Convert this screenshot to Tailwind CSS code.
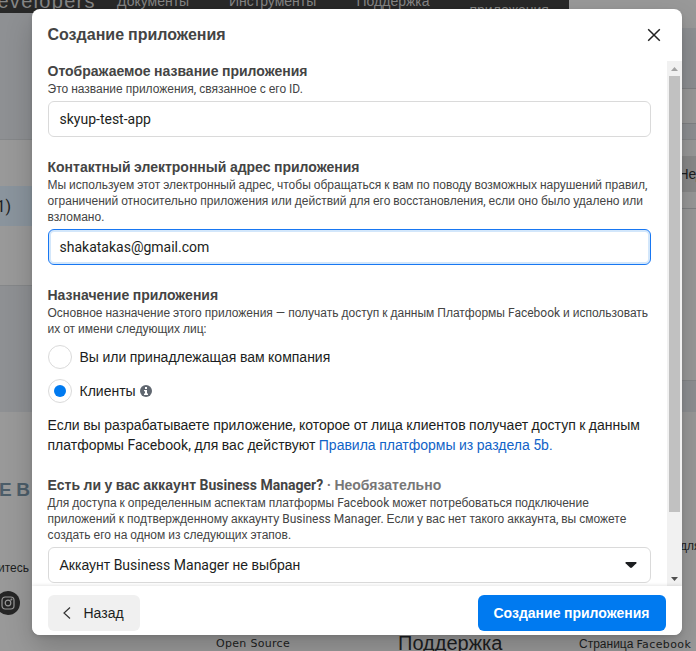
<!DOCTYPE html>
<html lang="ru">
<head>
<meta charset="utf-8">
<title>Создание приложения</title>
<script src="https://cdn.jsdelivr.net/npm/@tailwindcss/browser@4"></script>
</head>
<body class="relative h-[651px] w-[696px] overflow-hidden bg-[#999] font-['Roboto','Liberation_Sans',sans-serif] text-[#1c1e21]">

<!-- Dimmed page behind the dialog -->
<div class="flex h-[651px] flex-col overflow-hidden" aria-hidden="true">
  <div class="flex h-[13px] shrink-0">
    <div class="relative h-[13px] w-[569px] overflow-hidden bg-[#282828] whitespace-nowrap text-[#858585]">
      <span class="absolute -left-[15px] -top-[11px] font-['Liberation_Sans'] text-[20px] leading-[24px] tracking-[1.3px]">developers</span>
      <span class="absolute left-[117px] -top-[8px] text-[14px] leading-[18px]">Документы</span>
      <span class="absolute left-[229px] -top-[8px] text-[14px] leading-[18px]">Инструменты</span>
      <span class="absolute left-[356.500px] -top-[8px] text-[14px] leading-[18px]">Поддержка</span>
      <span class="absolute left-[469.500px] top-[1px] text-[14px] leading-[18px]">приложения</span>
    </div>
  </div>
  <div class="flex h-[399px] shrink-0 justify-between bg-[#8e9093]">
    <div class="flex w-[60px] flex-col pt-[126px]">
      <div class="flex h-[147px] flex-col border-y border-[#858789] bg-[#999] pt-[46px]">
        <div class="flex h-[40px] items-center bg-[#8a949d] text-[16px]"><span class="-ml-[3.500px] mt-[1px]">1)</span></div>
      </div>
    </div>
    <div class="flex w-[127px] flex-col">
      <div class="h-[15px] shrink-0 bg-[#999]"></div>
      <div class="mt-[60px] h-[36px] shrink-0 border-y border-[#808284] bg-[#999]"></div>
      <div class="mt-[15px] h-[242px] shrink-0 border-y border-[#858789] bg-[#999] pt-[16px]">
        <div class="flex h-[36px] items-center overflow-hidden bg-[#8a8a8a] pl-[109.500px] text-[14px] whitespace-nowrap"><span>Неделя</span></div>
        <div class="mt-[16px] h-px bg-[#808284]"></div>
      </div>
    </div>
  </div>
  <div class="relative h-[239px] shrink-0 overflow-hidden bg-[#999] whitespace-nowrap">
    <span class="absolute -left-[1px] top-[66px] font-['Liberation_Sans'] text-[19px] leading-[24px] font-bold tracking-[4.500px] text-[#4c5d69]">EB</span>
    <span class="absolute -left-[2px] top-[148px] text-[12px] leading-[16px]">итесь на</span>
    <span class="absolute left-[680px] top-[126px] text-[12px] leading-[16px]">для</span>
    <div class="absolute -left-[4px] top-[179px] flex size-[24px] items-center justify-center rounded-full bg-[#262626]">
      <svg class="size-[14px]" viewBox="0 0 14 14" fill="none" stroke="#999" stroke-width="1.2"><rect x="1" y="1" width="12" height="12" rx="3.2"/><circle cx="7" cy="7" r="2.8"/><circle cx="10.4" cy="3.6" r=".4"/></svg>
    </div>
    <span class="absolute left-[216px] top-[224px] font-['DejaVu_Sans'] text-[11px] leading-[16px] tracking-[.3px]">Open Source</span>
    <span class="absolute left-[398px] top-[218px] text-[20px] leading-[26px]">Поддержка</span>
    <span class="absolute left-[579px] top-[224px] text-[12px] leading-[16px]">Страница <span class="font-['DejaVu_Sans'] text-[11px] tracking-[.4px]">Facebook</span></span>
  </div>
</div>

<!-- Dialog -->
<div role="dialog" class="absolute left-[32px] top-[9px] flex h-[626px] w-[650px] flex-col overflow-hidden rounded-[8px] bg-white text-[14px] leading-[20px] whitespace-nowrap shadow-[0_12px_28px_rgba(0,0,0,.2),0_2px_4px_rgba(0,0,0,.1)]">
  <div class="flex h-[52px] shrink-0 items-center justify-between pl-[15.500px] pr-[21px]">
    <h2 class="text-[16px] font-bold text-[#444]">Создание приложения</h2>
    <svg class="size-[14px]" viewBox="0 0 14 14" fill="none" stroke="#222" stroke-width="1.5"><path d="M1.2 1.2 12.8 12.8M12.8 1.2 1.2 12.8"/></svg>
  </div>

  <div class="flex h-[525px] shrink-0 overflow-hidden">
    <div class="flex w-[635px] flex-col pl-[15.500px] pr-[16px]">
      <h3 class="font-bold text-[#444]">Отображаемое название приложения</h3>
      <p class="text-[12px] leading-[16px] text-[#444]">Это название приложения, связанное с его ID.</p>
      <div class="ml-[.5px] mt-[4px] flex h-[36px] shrink-0 items-center rounded-[6px] border border-[#dadada] px-[10.500px]"><span>skyup-test-app</span></div>

      <h3 class="mt-[20px] font-bold text-[#444]">Контактный электронный адрес приложения</h3>
      <p class="text-[12px] leading-[16px] text-[#444]">Мы используем этот электронный адрес, чтобы обращаться к вам по поводу возможных нарушений правил,<br>ограничений относительно приложения или действий для его восстановления, если оно было удалено или<br>взломано.</p>
      <div class="ml-[.5px] mt-[4px] flex h-[36px] shrink-0 items-center rounded-[6px] border border-[#1877f2] px-[10.500px] inset-ring-2 inset-ring-[#d3e7fb]"><span>shakatakas@gmail.com</span></div>

      <h3 class="mt-[20px] font-bold text-[#444]">Назначение приложения</h3>
      <p class="text-[12px] leading-[16px] text-[#444]">Основное назначение этого приложения — получать доступ к данным Платформы Facebook и использовать<br>их от имени следующих лиц:</p>
      <div class="ml-[.5px] mt-[8px] flex h-[24px] shrink-0 items-center gap-[7.500px]">
        <span class="size-[24px] rounded-full border border-[#dadada]"></span><span>Вы или принадлежащая вам компания</span>
      </div>
      <div class="ml-[.5px] mt-[10px] flex h-[24px] shrink-0 items-center">
        <span class="mr-[7.500px] flex size-[24px] items-center justify-center rounded-full border border-[#dadada]"><span class="size-[12px] rounded-full bg-[#007af0]"></span></span><span>Клиенты</span>
        <svg class="ml-[4.500px] size-[12px]" viewBox="0 0 12 12"><circle cx="6" cy="6" r="6" fill="#606770"/><path fill="#fff" d="M5 2h2v2H5zM4 5h3v3.500h1V10H4V8.500h1V6.200H4z"/></svg>
      </div>
      <p class="mt-[12px]">Если вы разрабатываете приложение, которое от лица клиентов получает доступ к данным<br>платформы Facebook, для вас действуют <a class="text-[#1163c7]">Правила платформы из раздела 5b.</a></p>

      <h3 class="mt-[20px] font-bold text-[#444]">Есть ли у вас аккаунт Business Manager? <span class="text-[#777]">· Необязательно</span></h3>
      <p class="text-[12px] leading-[16px] text-[#444]">Для доступа к определенным аспектам платформы Facebook может потребоваться подключение<br>приложений к подтвержденному аккаунту Business Manager. Если у вас нет такого аккаунта, вы сможете<br>создать его на одном из следующих этапов.</p>
      <div class="ml-[.5px] mt-[4px] flex h-[36px] shrink-0 items-center justify-between rounded-[6px] border border-[#dadada] pl-[10.500px] pr-[13px]">
        <span>Аккаунт Business Manager не выбран</span>
        <svg class="h-[6px] w-[12px]" viewBox="0 0 12 6"><path fill="#1c1e21" d="M1.2 0h9.6q1.2.3.6 1.3L7 5.6q-1 .7-2 0L.6 1.3Q0 .3 1.2 0z"/></svg>
      </div>
    </div>
    <div class="flex w-[15px] flex-col items-center bg-[#f1f1f1]">
      <svg class="h-[15px] w-[15px] shrink-0" viewBox="0 0 15 15"><path fill="#a3a3a3" d="M4 10h7L7.5 6z"/></svg>
      <div class="h-[436px] w-[11px] shrink-0 bg-[#c1c1c1]"></div>
      <svg class="mt-auto h-[15px] w-[15px] shrink-0" viewBox="0 0 15 15"><path fill="#505050" d="M4 6h7L7.5 10z"/></svg>
    </div>
  </div>

  <div class="relative flex h-[49px] shrink-0 items-start justify-between bg-white px-[16px] pt-[9px] shadow-[0_0_4px_rgba(0,0,0,.15)]">
    <div class="flex h-[36px] w-[92px] items-center rounded-[6px] bg-[#f0f0f0] pl-[15px]">
      <svg class="mr-[12.500px] h-[12px] w-[8px]" viewBox="0 0 8 12" fill="none" stroke="#333" stroke-width="1.2"><path d="M7 .5 1 6l6 5.500"/></svg>
      <span>Назад</span>
    </div>
    <div class="flex h-[36px] w-[188px] items-center rounded-[6px] bg-[#007af0] pl-[15.500px] font-bold text-white"><span>Создание приложения</span></div>
  </div>
</div>

<script>
// Cyrillic words use Liberation Sans; Latin, digits and punctuation stay in Roboto.
const walker = document.createTreeWalker(document.body, NodeFilter.SHOW_TEXT);
const nodes = [];
while (walker.nextNode()) {
  const n = walker.currentNode;
  if (n.parentElement.tagName !== 'SCRIPT' && /[\u0400-\u04FF]/.test(n.data)) nodes.push(n);
}
for (const n of nodes) {
  const parts = n.data.split(/([\u0400-\u04FF]+)/).filter(Boolean).map(t => {
    if (!/[\u0400-\u04FF]/.test(t)) return document.createTextNode(t);
    const s = document.createElement('span');
    s.className = "font-['Liberation_Sans']";
    s.textContent = t;
    return s;
  });
  n.replaceWith(...parts);
}
</script>
</body>
</html>
